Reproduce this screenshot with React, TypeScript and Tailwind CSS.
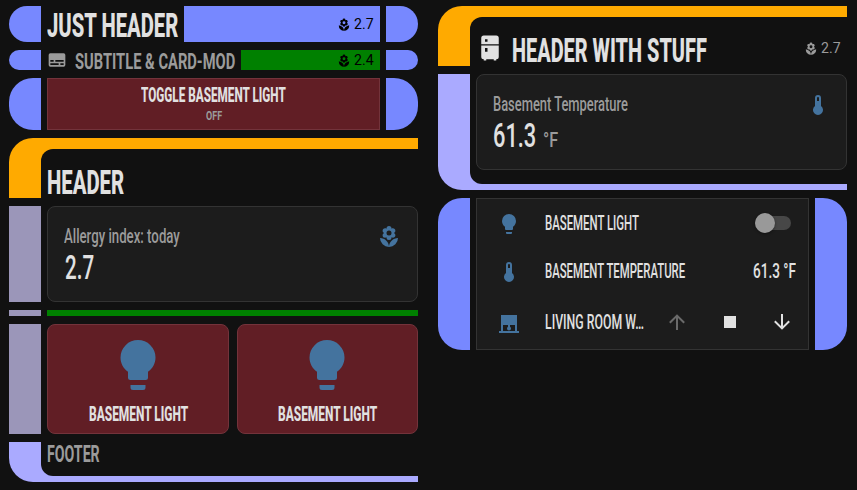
import { useLayoutEffect, useRef, useState } from "react";
import type { ReactNode } from "react";

const ICONS = {
  bulb: "M12,2A7,7 0 0,0 5,9C5,11.38 6.19,13.47 8,14.74V17A1,1 0 0,0 9,18H15A1,1 0 0,0 16,17V14.74C17.81,13.47 19,11.38 19,9A7,7 0 0,0 12,2M9,21A1,1 0 0,0 10,22H14A1,1 0 0,0 15,21V20H9V21Z",
  flower:
    "M3,13A9,9 0 0,0 12,22C12,17 7.97,13 3,13M12,5.5A2.5,2.5 0 0,1 14.5,8A2.5,2.5 0 0,1 12,10.5A2.5,2.5 0 0,1 9.5,8A2.5,2.5 0 0,1 12,5.5M5.6,10.25A2.5,2.5 0 0,0 8.1,12.75C8.63,12.75 9.12,12.58 9.5,12.31C9.5,12.37 9.5,12.43 9.5,12.5A2.5,2.5 0 0,0 12,15A2.5,2.5 0 0,0 14.5,12.5C14.5,12.43 14.5,12.37 14.5,12.31C14.88,12.58 15.37,12.75 15.9,12.75C17.28,12.75 18.4,11.63 18.4,10.25C18.4,9.25 17.81,8.4 16.97,8C17.81,7.6 18.4,6.74 18.4,5.75C18.4,4.37 17.28,3.25 15.9,3.25C15.37,3.25 14.88,3.41 14.5,3.69C14.5,3.63 14.5,3.56 14.5,3.5A2.5,2.5 0 0,0 12,1A2.5,2.5 0 0,0 9.5,3.5C9.5,3.56 9.5,3.63 9.5,3.69C9.12,3.41 8.63,3.25 8.1,3.25A2.5,2.5 0 0,0 5.6,5.75C5.6,6.74 6.19,7.6 7.03,8C6.19,8.4 5.6,9.25 5.6,10.25M12,22A9,9 0 0,0 21,13C16,13 12,17 12,22Z",
  thermometer:
    "M15 13V5A3 3 0 0 0 9 5V13A5 5 0 1 0 15 13M12 4A1 1 0 0 1 13 5V8H11V5A1 1 0 0 1 12 4Z",
  fridge:
    "M7,2H17A2,2 0 0,1 19,4V9H5V4A2,2 0 0,1 7,2M19,19A2,2 0 0,1 17,21V22H15V21H9V22H7V21A2,2 0 0,1 5,19V10H19V19M8,5V7H10V5H8M8,12V15H10V12H8Z",
  subtitles:
    "M20,4H4A2,2 0 0,0 2,6V18A2,2 0 0,0 4,20H20A2,2 0 0,0 22,18V6A2,2 0 0,0 20,4M4,12H8V14H4V12M14,18H4V16H14V18M20,18H16V16H20V18M20,14H10V12H20V14Z",
  shade:
    "M20 19V3H4V19H2V21H22V19M6 19V13H11V14.8C10.4 15.2 10 15.8 10 16.5C10 17.6 10.9 18.5 12 18.5S14 17.6 14 16.5C14 15.8 13.6 15.1 13 14.8V13H18V19H6Z",
  up: "M13,20H11V8L5.5,13.5L4.08,12.08L12,4.16L19.92,12.08L18.5,13.5L13,8V20Z",
  down: "M11,4H13V16L18.5,10.5L19.92,11.92L12,19.84L4.08,11.92L5.5,10.5L11,16V4Z",
  stop: "M18,18H6V6H18V18Z",
};

function Icon({ name, className = "size-6" }: { name: keyof typeof ICONS; className?: string }) {
  return (
    <svg viewBox="0 0 24 24" fill="currentColor" className={`shrink-0 ${className}`}>
      <path d={ICONS[name]} />
    </svg>
  );
}

/** Condensed lettering: squeezes one line of text to fill its box. */
function Narrow({ className, children }: { className: string; children: ReactNode }) {
  const box = useRef<HTMLDivElement>(null);
  const line = useRef<HTMLSpanElement>(null);
  const [scale, setScale] = useState(1);
  useLayoutEffect(() => {
    if (box.current && line.current) {
      setScale(box.current.clientWidth / line.current.offsetWidth);
    }
  }, []);
  return (
    <div ref={box} className={`flex shrink-0 items-center ${className}`}>
      <span
        ref={line}
        className="inline-block shrink-0 origin-left whitespace-nowrap"
        style={{ transform: `scaleX(${scale})` }}
      >
        {children}
      </span>
    </div>
  );
}

function Reading({ value, className }: { value: string; className: string }) {
  return (
    <div className={`flex items-center ${className}`}>
      <Icon name="flower" className="mr-[3px] size-[14px]" />
      <Narrow className="h-[21px] w-[20px] text-[15.5px]">{value}</Narrow>
    </div>
  );
}

function LightButton({ className }: { className: string }) {
  return (
    <div
      className={`flex h-[110px] flex-col items-center rounded-lg border border-[#73333b] bg-[#611e25] pt-[10px] ${className}`}
    >
      <Icon name="bulb" className="size-[60px] text-[#44739e]" />
      <Narrow className="mt-[9px] h-[21px] w-[99px] text-[20.5px] font-extrabold">
        BASEMENT LIGHT
      </Narrow>
    </div>
  );
}

function LeftColumn() {
  return (
    <div className="flex w-[409px] flex-col gap-2">
      <div className="flex h-9 gap-1.5">
        <div className="w-8 rounded-l-[18px] bg-[#7788ff]" />
        <Narrow className="h-[41px] w-[131px] text-[33.5px] font-extrabold">JUST HEADER</Narrow>
        <div className="flex flex-1 items-center justify-end bg-[#7788ff] pr-1.5">
          <Reading value="2.7" className="mt-px text-black" />
        </div>
        <div className="w-8 rounded-r-[18px] bg-[#7788ff]" />
      </div>

      <div className="flex h-5 gap-1.5">
        <div className="w-8 rounded-l-[10px] bg-[#7788ff]" />
        <div className="flex w-[188px] text-[#9b9b9b]">
          <Icon name="subtitles" className="size-5" />
          <Narrow className="ml-2 h-[23px] w-[160px] text-[22.5px] font-bold">
            SUBTITLE &amp; CARD-MOD
          </Narrow>
        </div>
        <div className="flex flex-1 items-center justify-end bg-[#008000] pr-1.5">
          <Reading value="2.4" className="mt-px text-black" />
        </div>
        <div className="w-8 rounded-r-[10px] bg-[#7788ff]" />
      </div>

      <div className="flex h-[52px] gap-1.5">
        <div className="w-8 rounded-l-[24px] bg-[#7788ff]" />
        <div className="flex flex-1 flex-col items-center border border-[#73333b] bg-[#611e25] pt-1.5">
          <Narrow className="h-5 w-[145px] text-[20px] font-extrabold">
            TOGGLE BASEMENT LIGHT
          </Narrow>
          <Narrow className="mt-[2px] h-4 w-4 text-[13.5px] font-bold text-[#9b9b9b]">OFF</Narrow>
        </div>
        <div className="w-8 rounded-r-[24px] bg-[#7788ff]" />
      </div>

      <div className="h-[60px] rounded-tl-[24px] bg-[#ffaa00] pt-[11px] pl-8">
        <div className="flex h-full items-start rounded-tl-[12px] bg-[#111111] pt-[14px] pl-1.5">
          <Narrow className="h-10 w-[77px] text-[33.5px] font-extrabold">HEADER</Narrow>
        </div>
      </div>

      <div className="flex h-24 gap-1.5">
        <div className="w-8 bg-[#9b96b9]" />
        <div className="flex flex-1 justify-between rounded-lg border border-[#333333] bg-[#1c1c1c] pt-[18px] pr-4 pl-4">
          <div>
            <Narrow className="h-6 w-[116px] text-[19.5px] font-medium text-[#9b9b9b]">
              Allergy index: today
            </Narrow>
            <Narrow className="ml-px h-[37px] w-[29px] text-[34px] font-medium">2.7</Narrow>
          </div>
          <Icon name="flower" className="size-6 text-[#44739e]" />
        </div>
      </div>

      <div className="flex h-1.5 gap-1.5">
        <div className="w-8 bg-[#9b96b9]" />
        <div className="flex-1 bg-[#008000]" />
      </div>

      <div className="flex h-[110px]">
        <div className="mr-1.5 w-8 bg-[#9b96b9]" />
        <LightButton className="mr-2 w-[182px]" />
        <LightButton className="w-[181px] pr-px" />
      </div>

      <div className="h-10 rounded-bl-[24px] bg-[#aaaaff] pb-1.5 pl-8">
        <div className="flex h-full items-start rounded-bl-[12px] bg-[#111111] pl-1.5">
          <Narrow className="h-[27px] w-[53px] text-[23px] font-bold text-[#9b9b9b]">FOOTER</Narrow>
        </div>
      </div>
    </div>
  );
}

function RightColumn() {
  return (
    <div className="flex w-[409px] flex-col gap-2">
      <div className="h-[60px] rounded-tl-[24px] bg-[#ffaa00] pt-[11px] pl-8">
        <div className="flex h-full items-start rounded-tl-[12px] bg-[#111111] pr-[6px] pl-[5px]">
          <Icon name="fridge" className="mt-4 size-[30px]" />
          <Narrow className="mt-[14px] ml-[7px] h-10 w-[195px] text-[33.5px] font-extrabold">
            HEADER WITH STUFF
          </Narrow>
          <Reading value="2.7" className="mt-[21px] ml-auto text-[#9b9b9b]" />
        </div>
      </div>

      <div className="h-[116px] rounded-bl-[24px] bg-[#aaaaff] pb-1.5 pl-8">
        <div className="h-full rounded-bl-[12px] bg-[#111111] pl-1.5">
          <div className="flex h-24 justify-between rounded-lg border border-[#333333] bg-[#1c1c1c] pt-[18px] pr-4 pl-4">
            <div>
              <Narrow className="h-6 w-[135px] text-[19.5px] font-medium text-[#9b9b9b]">
                Basement Temperature
              </Narrow>
              <div className="flex">
                <Narrow className="h-[36px] w-[43px] text-[34px] font-medium">61.3</Narrow>
                <Narrow className="mt-[11px] ml-[7px] h-[25px] w-[15px] text-[20.5px] font-medium text-[#9b9b9b]">
                  °F
                </Narrow>
              </div>
            </div>
            <Icon name="thermometer" className="size-6 text-[#44739e]" />
          </div>
        </div>
      </div>

      <div className="flex h-[152px] gap-1.5">
        <div className="w-8 rounded-l-[24px] bg-[#7788ff]" />
        <div className="flex-1 border border-[#333333] bg-[#1c1c1c] pl-5 text-[20.5px] font-medium">
          <div className="flex h-12 items-center">
            <Icon name="bulb" className="mt-[2px] size-6 text-[#44739e]" />
            <Narrow className="ml-6 h-12 w-[94px]">BASEMENT LIGHT</Narrow>
            <div className="mr-[17px] ml-auto flex h-[14px] w-9 items-center rounded-full bg-[#474747]">
              <div className="size-5 shrink-0 rounded-full bg-[#999999] shadow-[0_1px_3px_rgba(0,0,0,0.4)]" />
            </div>
          </div>
          <div className="flex h-12 items-center">
            <Icon name="thermometer" className="mt-[2px] size-6 text-[#44739e]" />
            <Narrow className="ml-6 h-12 w-[140px]">BASEMENT TEMPERATURE</Narrow>
            <Narrow className="mr-3 ml-auto h-12 w-[43px]">61.3 °F</Narrow>
          </div>
          <div className="flex h-[54px] items-center">
            <Icon name="shade" className="mt-[3px] size-6 text-[#44739e]" />
            <Narrow className="ml-6 h-[54px] w-[99px]">LIVING ROOM W…</Narrow>
            <div className="ml-[21px] flex">
              <Icon name="up" className="mr-[29px] size-6 text-[#6a6a6a]" />
              <Icon name="stop" className="mr-7 size-6" />
              <Icon name="down" className="size-6" />
            </div>
          </div>
        </div>
        <div className="w-8 rounded-r-[24px] bg-[#7788ff]" />
      </div>
    </div>
  );
}

export default function App() {
  return (
    <div className="flex h-[490px] w-[857px] items-start gap-5 overflow-hidden bg-[#111111] pt-1.5 pl-[9px] font-[Roboto,sans-serif] text-[#e1e1e1]">
      <LeftColumn />
      <RightColumn />
    </div>
  );
}
